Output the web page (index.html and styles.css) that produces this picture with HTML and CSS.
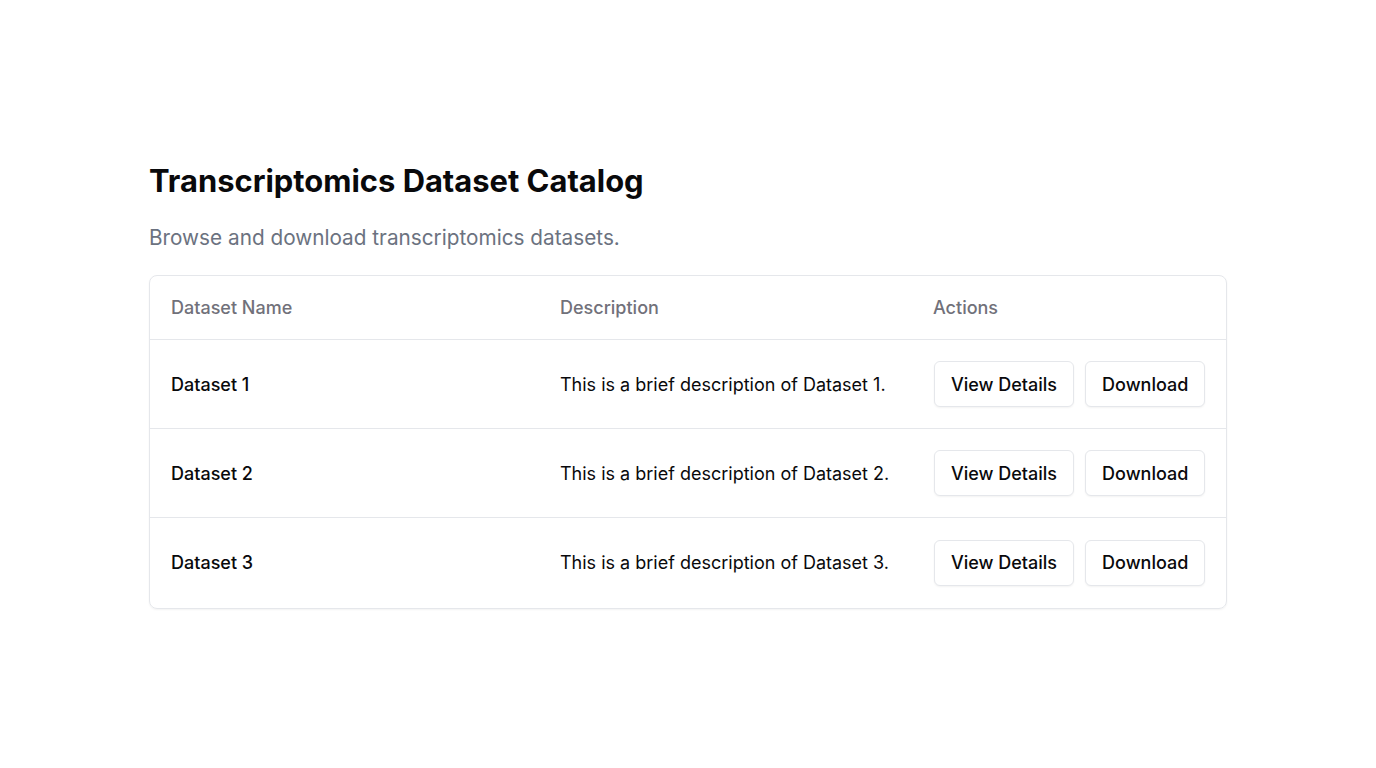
FILE: index.html
```html
<!DOCTYPE html>
<html>
<head>
<meta charset="utf-8">
<link rel="stylesheet" href="styles.css">
</head>
<body>
<main class="page">
  <section class="catalog">
    <h1 class="title">Transcriptomics Dataset Catalog</h1>
    <p class="subtitle">Browse and download transcriptomics datasets.</p>
    <div class="card">
      <table class="table">
        <colgroup>
          <col class="col-name">
          <col class="col-desc">
          <col class="col-actions">
        </colgroup>
        <thead>
          <tr><th>Dataset Name</th><th>Description</th><th>Actions</th></tr>
        </thead>
        <tbody>
          <tr>
            <td class="name">Dataset 1</td>
            <td>This is a brief description of Dataset 1.</td>
            <td class="actions-cell"><div class="actions"><button class="btn">View Details</button><button class="btn">Download</button></div></td>
          </tr>
          <tr>
            <td class="name">Dataset 2</td>
            <td>This is a brief description of Dataset 2.</td>
            <td class="actions-cell"><div class="actions"><button class="btn">View Details</button><button class="btn">Download</button></div></td>
          </tr>
          <tr>
            <td class="name">Dataset 3</td>
            <td>This is a brief description of Dataset 3.</td>
            <td class="actions-cell"><div class="actions"><button class="btn">View Details</button><button class="btn">Download</button></div></td>
          </tr>
        </tbody>
      </table>
    </div>
  </section>
</main>
</body>
</html>
```
FILE: styles.css
```css
* { box-sizing: border-box; }
html, body { margin: 0; padding: 0; background: #fff; }
body { font-family: Inter, "Noto Sans", sans-serif; color: #0a0a0a; }
.page {
  min-height: 100vh;
  display: flex;
  align-items: center;
  justify-content: center;
}
.catalog { width: 1078px; }
.title {
  margin: 0;
  font-size: 30.9px;
  line-height: 42px;
  font-weight: 700;
  color: #09090b;
}
.subtitle {
  margin: 22px 0 23px;
  font-size: 20.75px;
  line-height: 28px;
  color: #6b7280;
}
.card {
  border: 1px solid #e5e7eb;
  border-radius: 8px;
  box-shadow: 0 1px 2px rgba(0,0,0,0.05);
  overflow: hidden;
}
.table {
  width: 100%;
  border-collapse: collapse;
  table-layout: fixed;
  font-size: 18px;
}
.col-name { width: 389px; }
.col-desc { width: 373px; }
.table th {
  text-align: left;
  font-weight: 500;
  color: #71717a;
  padding: 0 21px;
  height: 64px;
  border-bottom: 1px solid #e5e7eb;
}
.table td {
  padding: 0 21px;
  height: 89px;
  border-bottom: 1px solid #e5e7eb;
  color: #09090b;
}
.table td.actions-cell { padding-left: 22px; padding-right: 20px; }
.table tbody tr:last-child td { border-bottom: none; height: 90px; }
.name { font-weight: 500; }
.actions { display: flex; gap: 11px; }
.btn {
  font-family: inherit;
  font-size: 18px;
  font-weight: 500;
  color: #09090b;
  background: #fff;
  border: 1px solid #e5e7eb;
  border-radius: 6px;
  height: 46px;
  padding: 0 16px;
  box-shadow: 0 1px 2px rgba(0,0,0,0.05);
}
```
